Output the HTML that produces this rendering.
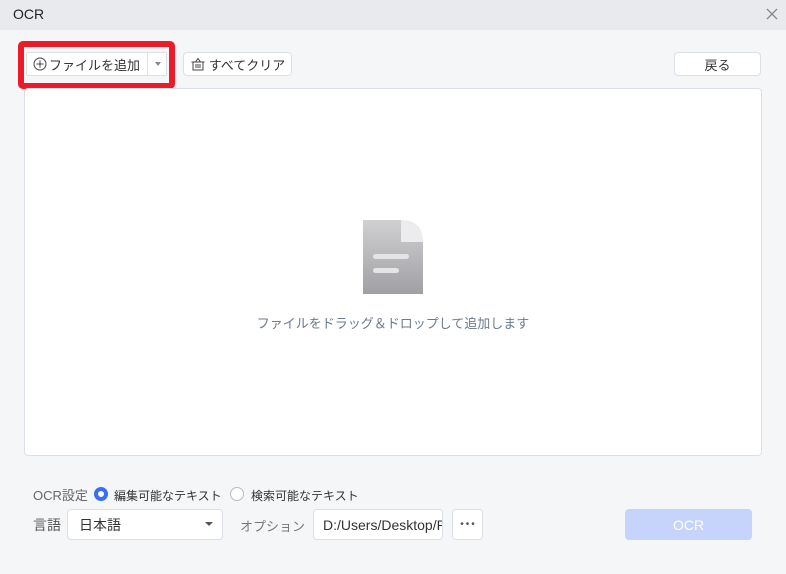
<!DOCTYPE html>
<html><head><meta charset="utf-8"><style>
*{box-sizing:border-box;margin:0;padding:0}
body{width:786px;height:574px;background:#f5f6f8;font-family:"Liberation Sans","Noto Sans CJK JP",sans-serif;position:relative;overflow:hidden;color:#333}
.a{position:absolute}
.btn{position:absolute;background:#fff;border:1px solid #dcdfe6;border-radius:4px;font-size:13px;display:flex;align-items:center;justify-content:center;color:#333}
</style></head><body>
<div class="a" style="left:0;top:0;width:786px;height:30px;background:#e8eaed"></div>
<div class="a" style="left:13px;top:6px;font-size:14px;color:#222">OCR</div>
<svg class="a" style="left:765px;top:7px" width="14" height="14"><path d="M2 2L12 12M12 2L2 12" stroke="#888" stroke-width="1.3"/></svg>
<div class="a" style="left:18px;top:41px;width:157px;height:48px;border:6px solid #ea1c2a;border-radius:5px"></div>
<div class="btn" style="left:26px;top:52px;width:141px;height:24px;justify-content:flex-start;padding-left:6px;border-radius:2px">
<svg width="14" height="14" style="margin-right:2px"><circle cx="7" cy="7" r="6" fill="none" stroke="#444"/><path d="M7 3.5V10.5M3.5 7H10.5" stroke="#444"/></svg>ファイルを追加</div>
<div class="a" style="left:147px;top:53px;width:1px;height:22px;background:#e3e5ea"></div>
<div class="a" style="left:155px;top:62px;border:3px solid transparent;border-top:4px solid #888"></div>
<div class="btn" style="left:183px;top:52px;width:109px;height:24px">
<svg width="16" height="16" style="margin-right:3px"><path d="M1.5 6H14.5M3 6V14H13V6M5.5 6L8 2.5L10.5 6M6 8V12M8 8V12M10 8V12" fill="none" stroke="#444"/></svg>すべてクリア</div>
<div class="btn" style="left:674px;top:52px;width:87px;height:24px">戻る</div>
<div class="a" style="left:24px;top:88px;width:738px;height:368px;background:#fff;border:1px solid #dcdfe6;border-radius:4px"></div>
<svg class="a" style="left:363px;top:220px" width="60" height="74"><defs><linearGradient id="g" x1="0" y1="0" x2="0" y2="1"><stop offset="0" stop-color="#d0d0d2"/><stop offset="1" stop-color="#a0a0a4"/></linearGradient></defs>
<path d="M0 0H38L60 22V74H0Z" fill="url(#g)"/><path d="M38 0Q60 0 60 22H38Z" fill="#ececee"/>
<rect x="10" y="34" width="36" height="5" rx="2.5" fill="#e4e4e6"/><rect x="10" y="48" width="26" height="5" rx="2.5" fill="#e4e4e6"/></svg>
<div class="a" style="left:0;width:786px;top:313px;text-align:center;font-size:13px;color:#6b7a8c">ファイルをドラッグ＆ドロップして追加します</div>
<div class="a" style="left:33px;top:485px;font-size:13px;color:#666">OCR設定</div>
<div class="a" style="left:94px;top:487px;width:14px;height:14px;border-radius:50%;border:4px solid #3b6ef5;background:#fff"></div>
<div class="a" style="left:114px;top:487px;font-size:12px;color:#333">編集可能なテキスト</div>
<div class="a" style="left:230px;top:487px;width:14px;height:14px;border-radius:50%;border:1px solid #bbb;background:#fff"></div>
<div class="a" style="left:251px;top:487px;font-size:12px;color:#333">検索可能なテキスト</div>
<div class="a" style="left:33px;top:515px;font-size:14px;color:#555">言語</div>
<div class="btn" style="left:67px;top:509px;width:156px;height:31px;justify-content:flex-start;padding-left:11px;font-size:14px">日本語</div>
<div class="a" style="left:205px;top:522px;border:4px solid transparent;border-top:4px solid #555;border-bottom:0"></div>
<div class="a" style="left:240px;top:516px;font-size:13px;color:#777">オプション</div>
<div class="btn" style="left:313px;top:509px;width:130px;height:31px;justify-content:flex-start;padding-left:9px;font-size:14px;overflow:hidden;white-space:nowrap">D:/Users/Desktop/P</div>
<div class="btn" style="left:452px;top:509px;width:31px;height:31px;font-size:10px;letter-spacing:2px;color:#555;padding-left:2px">•••</div>
<div class="a" style="left:625px;top:509px;width:127px;height:31px;background:#c6d4fb;border-radius:4px;color:#fff;font-size:14px;display:flex;align-items:center;justify-content:center">OCR</div>
</body></html>
